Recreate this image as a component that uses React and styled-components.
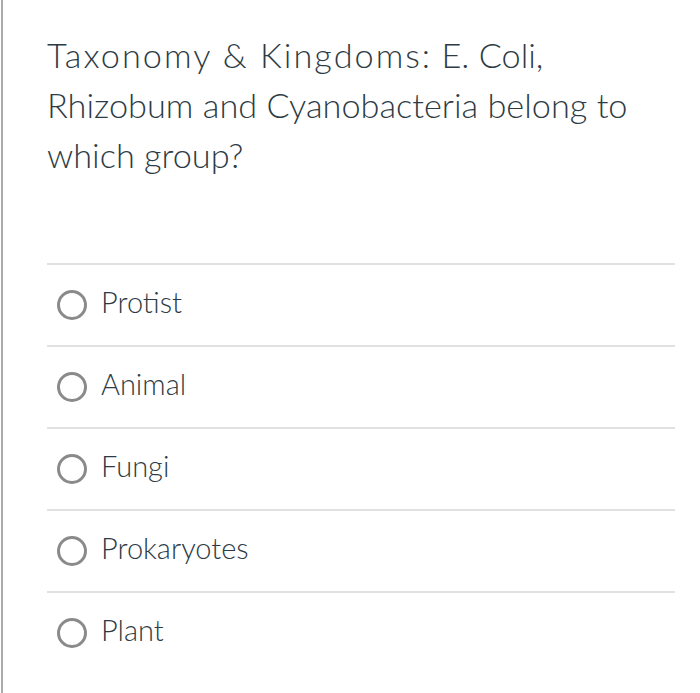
import styled, { createGlobalStyle } from "styled-components";

const GlobalStyle = createGlobalStyle`
  html, body {
    margin: 0;
    padding: 0;
    background: #ffffff;
  }
  body {
    font-family: Lato, "Noto Sans", "Liberation Sans", sans-serif;
    color: #2d3b45;
  }
`;

const Page = styled.div`
  margin-left: 1px;
  min-height: 693px;
  border-left: 2px solid #ababab;
  padding: 30px 25px 0 44px;
  box-sizing: border-box;
`;

const Question = styled.h1`
  margin: 0 0 83px;
  font-size: 34.3px;
  font-weight: 300;
  line-height: 50px;
  color: #2d3b45;
`;

const Topic = styled.span`
  letter-spacing: 2px;
`;

const OptionList = styled.ul`
  list-style: none;
  margin: 0;
  padding: 0;
`;

const OptionRow = styled.li`
  display: flex;
  align-items: flex-start;
  gap: 14px;
  border-top: 2px solid #e1e1e1;
  padding: 19px 0 25px 10px;
`;

const Radio = styled.span`
  flex: none;
  width: 30px;
  height: 30px;
  margin-top: 6px;
  box-sizing: border-box;
  border: 3px solid #8a8a8a;
  border-radius: 50%;
`;

const OptionLabel = styled.span`
  font-size: 29px;
  font-weight: 300;
  line-height: 35px;
  color: #2d3b45;
`;

const options = ["Protist", "Animal", "Fungi", "Prokaryotes", "Plant"];

export default function App() {
  return (
    <>
      <GlobalStyle />
      <Page>
        <Question>
          <Topic>Taxonomy &amp; Kingdoms:</Topic> E. Coli, Rhizobum and
          Cyanobacteria belong to which group?
        </Question>
        <OptionList>
          {options.map((o) => (
            <OptionRow key={o}>
              <Radio />
              <OptionLabel>{o}</OptionLabel>
            </OptionRow>
          ))}
        </OptionList>
      </Page>
    </>
  );
}
